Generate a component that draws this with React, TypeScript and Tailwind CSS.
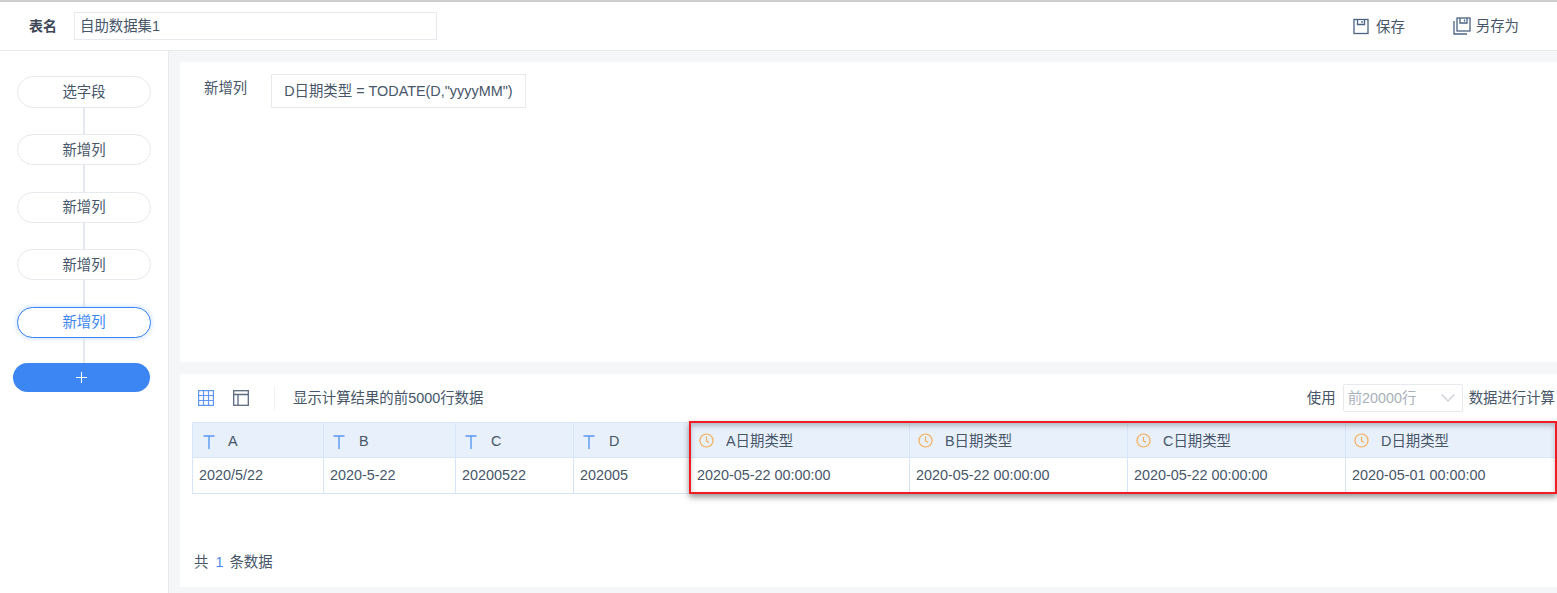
import React from "react";

const font = { fontFamily: '"Liberation Sans", "Noto Sans CJK SC", sans-serif' };

function SaveIcon() {
  return (
    <svg className="mt-[1px]" width="16" height="17" viewBox="0 0 16 17" fill="none" stroke="#4a6485" strokeWidth="1.3">
      <rect x="1" y="1.5" width="14" height="14" />
      <path d="M4.5 1.5V6.5H11.5V1.5" />
      <path d="M9 3V5" />
    </svg>
  );
}

function SaveAsIcon() {
  return (
    <svg className="mt-[1px]" width="18" height="18" viewBox="0 0 18 18" fill="none" stroke="#4a6485" strokeWidth="1.3">
      <rect x="4" y="1" width="13" height="13" />
      <path d="M7 1V6H14V1" />
      <path d="M11.5 2.5V4.5" />
      <path d="M1 4V17H14" />
    </svg>
  );
}

function GridIcon() {
  return (
    <svg width="16" height="16" viewBox="0 0 16 16" fill="none" stroke="#5f95f5" strokeWidth="1.2">
      <rect x="0.6" y="0.6" width="14.8" height="14.8" />
      <path d="M5.5 1V15M10.5 1V15M1 5.5H15M1 10.5H15" />
    </svg>
  );
}

function LayoutIcon() {
  return (
    <svg width="16" height="16" viewBox="0 0 16 16" fill="none" stroke="#5b6b80" strokeWidth="1.3">
      <rect x="0.7" y="0.7" width="14.6" height="14.6" />
      <path d="M1 4.5H15M5 4.5V15" />
    </svg>
  );
}

function TIcon() {
  return (
    <svg className="mt-[4px]" width="12" height="14" viewBox="0 0 12 14" fill="none" stroke="#5b97f5" strokeWidth="1.4">
      <path d="M0.5 1H11.5M6 1V14" />
    </svg>
  );
}

function ClockIcon() {
  return (
    <svg className="mt-[1px]" width="15" height="15" viewBox="0 0 15 15" fill="none" stroke="#f5ad57" strokeWidth="1.2">
      <circle cx="7.5" cy="7.5" r="6.5" />
      <path d="M7.5 3.8V8L10 9.6" />
    </svg>
  );
}

function Pill({ label, active, tall, down }: { label: string; active?: boolean; tall?: boolean; down?: boolean }) {
  return (
    <div
      className={
        active
          ? "flex h-[31px] w-[134px] items-center justify-center rounded-[16px] border border-[#3b86f3] bg-white text-[#3b86f3] shadow-[0_0_5px_#bcd6fb]"
          : tall
            ? "flex h-[32px] w-[134px] items-center justify-center rounded-[16px] border border-[#e6e9ee] bg-white"
            : "flex h-[31px] w-[134px] items-center justify-center rounded-[16px] border border-[#e6e9ee] bg-white"
      }
    >
      <span className={down ? "pt-[2px]" : ""}>{label}</span>
    </div>
  );
}

const plainCols = [
  { name: "A", value: "2020/5/22", width: "w-[131px]", pad: "pl-[10px]", gap: "gap-[13px]" },
  { name: "B", value: "2020-5-22", width: "w-[132px]", pad: "pl-[9px]", gap: "gap-[14px]" },
  { name: "C", value: "20200522", width: "w-[118px]", pad: "pl-[9px]", gap: "gap-[14px]" },
  { name: "D", value: "202005", width: "w-[117px]", pad: "pl-[9px]", gap: "gap-[14px]" },
];

const dateCols = [
  { name: "A日期类型", value: "2020-05-22 00:00:00", width: "w-[219px]" },
  { name: "B日期类型", value: "2020-05-22 00:00:00", width: "w-[218px]" },
  { name: "C日期类型", value: "2020-05-22 00:00:00", width: "w-[218px]" },
  { name: "D日期类型", value: "2020-05-01 00:00:00", width: "w-[218px]" },
];

export default function App() {
  return (
    <div className="flex h-[593px] w-[1557px] flex-col overflow-hidden bg-white text-[14.4px] text-[#475669]" style={font}>
      <div className="h-[2px] shrink-0 bg-[#cfcfcf]" />
      <header className="flex h-[49px] shrink-0 items-center border-b border-[#e6e9ee] pr-[38px]">
        <span className="ml-[29px] text-[14px] font-bold text-[#3d4757]">表名</span>
        <div className="ml-[17px] flex h-[28px] w-[363px] items-center border border-[#e6e9ee] pl-[5px] pt-[2px]">
          自助数据集1
        </div>
        <div className="ml-auto flex items-center">
          <div className="flex items-center gap-[7px]">
            <SaveIcon />
            <span className="pt-[4px]">保存</span>
          </div>
          <div className="ml-[48px] flex items-center gap-[5px]">
            <SaveAsIcon />
            <span className="pt-[2px]">另存为</span>
          </div>
        </div>
      </header>
      <div className="flex min-h-0 flex-1">
        <aside className="flex w-[169px] shrink-0 flex-col border-r border-[#e6e9ee] pt-[25px]">
          <div className="ml-[17px] flex w-[134px] flex-col items-center">
            <Pill label="选字段" tall down />
            <div className="h-[26px] w-[2px] bg-[#e4e7ec]" />
            <Pill label="新增列" down />
            <div className="h-[27px] w-[2px] bg-[#e4e7ec]" />
            <Pill label="新增列" />
            <div className="h-[26px] w-[2px] bg-[#e4e7ec]" />
            <Pill label="新增列" down />
            <div className="h-[27px] w-[2px] bg-[#e4e7ec]" />
            <Pill label="新增列" active />
            <div className="h-[25px] w-[2px] bg-[#e4e7ec]" />
          </div>
          <div className="ml-[13px] flex h-[29px] w-[137px] items-center justify-center rounded-[15px] bg-[#3b86f3]">
            <svg width="11" height="11" viewBox="0 0 11 11" stroke="#fff" strokeWidth="1.1">
              <path d="M5.5 0V11M0 5.5H11" />
            </svg>
          </div>
        </aside>
        <main className="flex min-w-0 flex-1 flex-col gap-[12px] bg-[#f5f6f8] pb-[6px] pl-[11px] pt-[11px]">
          <section className="flex h-[300px] shrink-0 items-start bg-white pl-[24px] pt-[12px]">
            <span className="mt-[4px]">新增列</span>
            <div className="ml-[24px] flex h-[34px] w-[255px] items-center border border-[#e6e9ee] pl-[12px] pt-[2px]">
              D日期类型 = TODATE(D,"yyyyMM")
            </div>
          </section>
          <section className="relative min-h-0 flex-1 bg-white pl-[12px]">
            <div className="flex h-[48px] items-center">
              <div className="ml-[6px] flex items-center gap-[19px]">
                <GridIcon />
                <LayoutIcon />
              </div>
              <div className="ml-[25px] h-[24px] w-px bg-[#eef0f3]" />
              <span className="ml-[18px] pt-[2px]">显示计算结果的前5000行数据</span>
              <div className="ml-auto flex items-center">
                <span className="pt-[2px]">使用</span>
                <div className="ml-[7px] flex h-[28px] w-[120px] items-center justify-between rounded-[2px] border border-[#e6e9ee] pl-[4px] pr-[7px] text-[#a9b1bd]">
                  <span className="pt-[2px]">前20000行</span>
                  <svg width="14" height="8" viewBox="0 0 14 8" fill="none" stroke="#c5cad2" strokeWidth="1.1">
                    <path d="M0.5 0.5L7 7L13.5 0.5" />
                  </svg>
                </div>
                <span className="ml-[6px] mr-[2px] pt-[2px]">数据进行计算</span>
              </div>
            </div>
            <div className="flex w-[1365px] border-l border-[#d6e5f9]">
              {plainCols.map((c) => (
                <div key={c.name} className={`${c.width} shrink-0`}>
                  <div className={`flex h-[36px] items-center border-y border-r border-[#d6e5f9] bg-[#e8f0fc] ${c.pad} ${c.gap}`}>
                    <TIcon />
                    <span className="mt-[3px]">{c.name}</span>
                  </div>
                  <div className="flex h-[36px] items-center border-b border-r border-[#d6e5f9] pl-[6px]">
                    {c.value}
                  </div>
                </div>
              ))}
              {dateCols.map((c) => (
                <div key={c.name} className={`${c.width} shrink-0`}>
                  <div className="flex h-[36px] items-center gap-[12px] border-y border-r border-[#d6e5f9] bg-[#e8f0fc] pl-[8px]">
                    <ClockIcon />
                    <span className="mt-[3px]">{c.name}</span>
                  </div>
                  <div className="flex h-[36px] items-center border-b border-r border-[#d6e5f9] pl-[6px]">
                    {c.value}
                  </div>
                </div>
              ))}
            </div>
            <div className="absolute left-[509px] top-[47px] h-[73px] w-[868px] border-2 border-[#f01c25] shadow-[0_3px_6px_rgba(60,60,60,0.55),inset_0_3px_5px_rgba(60,60,60,0.3)]" />
            <div className="mt-[58px] flex items-center">
              <span className="ml-[2px]">共</span>
              <span className="ml-[7px] text-[#4a86f0]">1</span>
              <span className="ml-[6px]">条数据</span>
            </div>
          </section>
        </main>
      </div>
    </div>
  );
}
